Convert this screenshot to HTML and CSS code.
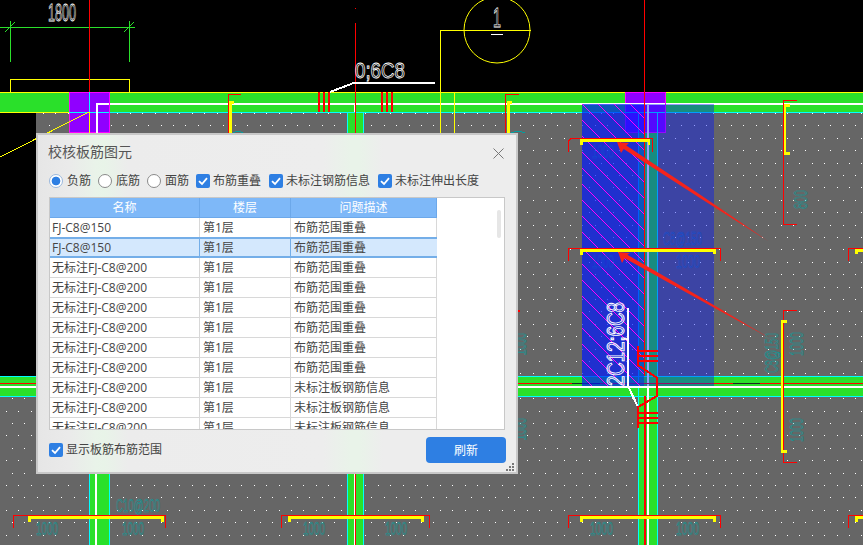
FILE: index.html
```html
<!DOCTYPE html>
<html lang="zh-CN">
<head>
<meta charset="utf-8">
<title>校核板筋图元</title>
<link rel="stylesheet" href="styles.css">
</head>
<body>
<main class="stage">
<svg class="cad" width="863" height="545" viewBox="0 0 863 545" aria-hidden="true">
  <defs>
    <pattern id="hatch" patternUnits="userSpaceOnUse" width="16" height="16">
      <path class="hatch" d="M0 2L14 16M14 0L16 2"/>
    </pattern>
  </defs>
  <rect class="gray" x="36" y="112" width="827" height="264"/>
  <rect class="gray" x="0" y="396" width="863" height="149"/>
  <path class="dots" d="M42.900 113.500H863M49 125.900H863M42.900 138.300H863M49 150.700H863M42.900 163.100H863M49 175.500H863M42.900 187.900H863M49 200.300H863M42.900 212.700H863M49 225.100H863M42.900 237.500H863M49 249.900H863M42.900 262.300H863M49 274.700H863M42.900 287.100H863M49 299.500H863M42.900 311.900H863M49 324.300H863M42.900 336.700H863M49 349.100H863M42.900 361.500H863M49 373.900H863M11.800 398.700H863M5.700 411.100H863M11.800 423.500H863M5.700 435.900H863M11.800 448.300H863M5.700 460.700H863M11.800 473.100H863M5.700 485.500H863M11.800 497.900H863M5.700 510.300H863M11.800 522.700H863M5.700 535.100H863"/>

  <!-- beams -->
  <rect class="green" x="0" y="92" width="863" height="20"/>
  <rect class="green" x="0" y="376" width="863" height="20"/>
  <rect class="green" x="89" y="396" width="20" height="149"/>
  <rect class="green" x="347" y="112" width="16" height="433"/>
  <rect class="green" x="638" y="112" width="20" height="433"/>
  <path class="ln y" d="M0 92.500H863M0 112.500H89"/>
  <path class="ln c" d="M109 112.500H863M0 376.500H863M0 396.500H863M89.500 396V545M109.500 396V545M347.500 112V545M363.500 112V545M638.500 112V545M657.500 112V545"/>
  <path class="ln w2" d="M97 103.500H863M355 103V112M0 387H863M96 396V545M355 396V545M648 112V545"/>
  <path class="ln r" d="M0 383.500H863"/>
  <path class="ln k" d="M572 383.500H600M733 383.500H760"/>

  <!-- columns -->
  <rect class="col" x="69.500" y="92.500" width="40" height="40"/>
  <rect class="col" x="625.500" y="92.500" width="40" height="40"/>
  <path class="ln c" d="M89.500 92V112M69 112.500H109M625 112.500H665M638.500 112V133M657.500 112V133"/>
  <path class="ln w2" d="M109 103.500H97V133M625 103.500H665M648 103V133"/>
  <path class="ln y" d="M89.500 112V133M0 157L89 112"/>

  <!-- dimension and section mark -->
  <path class="ln g" d="M0 27.500H135M10.500 21V62M129.500 21V62M5 32L15 22M124 32L134 22"/>
  <path class="ln y" d="M10.500 92V79.500H129.500V92"/>
  <rect class="rf" x="89" y="0" width="1" height="92"/>
  <rect class="rf" x="355" y="8" width="1" height="1"/>
  <rect class="rf" x="355" y="23" width="1" height="522"/>
  <circle class="ring" cx="497" cy="30" r="33"/>
  <path class="ln y" d="M440.500 133V30.500H531M454.500 92V133"/>
  <path class="ln w1" d="M491 34.500H503"/>
  <text class="cadw" x="493" y="27" font-size="28" textLength="8" lengthAdjust="spacingAndGlyphs">1</text>
  <text class="cadw" x="48" y="21" font-size="24" textLength="28" lengthAdjust="spacingAndGlyphs">1800</text>
  <text class="cadw" x="355" y="78" font-size="22" textLength="50" lengthAdjust="spacingAndGlyphs">0;6C8</text>
  <path class="ln w2" d="M355 82.500H435M355 82.500L330 92"/>
  <path class="ln r2" d="M319 92V112M324 92V112M329 92V112M382 92V112M387 92V112M392 92V112"/>

  <!-- top brackets -->
  <path class="ln r" d="M241 94.500H228.500V133M519 94.500H505.500V133M797 100.500H783.500V224.500H797"/>
  <path class="ly" d="M229 101H234V104H232V133H229ZM507 101H512V104H510V133H507ZM784 104H790V107H786V152H790V155H784Z"/>
  <path class="ln t" d="M233 133Q238 130 243 133M511 133Q518 130 525 133"/>
  <text class="cadt" transform="rotate(-90 807 209)" x="807" y="209" font-size="18" textLength="19" lengthAdjust="spacingAndGlyphs">800</text>
  <rect class="rf" x="518" y="310" width="2" height="2"/>

  <!-- slab overlay -->
  <rect class="ov" x="582" y="104" width="132" height="282"/>
  <rect class="ov2" x="582" y="104" width="62" height="282"/>
  <rect class="hf" x="582" y="104" width="62" height="282"/>
  <rect class="rf" x="644" y="0" width="1" height="376"/>
  <rect class="rf" x="644" y="396" width="2" height="149"/>

  <!-- bracket over slab -->
  <path class="ln r" d="M568.500 152V141L571 138.500H652.500V152M568.500 261V248.500H720.500V261M863 248.500H848.500V261"/>
  <path class="ly" d="M580 139H650V145H648V142H583V145H580ZM580 249H716V254H713V252H583V255H580ZM863 249H855V254H858V252H863Z"/>
  <text class="cadb" x="663" y="245" font-size="19" textLength="39" lengthAdjust="spacingAndGlyphs">C8@150</text>
  <text class="cadb" x="676" y="268" font-size="19" textLength="24" lengthAdjust="spacingAndGlyphs">1000</text>
  <text class="cadb" x="592" y="158" font-size="18" textLength="22" lengthAdjust="spacingAndGlyphs">1000</text>
  <text class="cadb" x="592" y="268" font-size="18" textLength="22" lengthAdjust="spacingAndGlyphs">1000</text>

  <!-- right bracket -->
  <path class="ln r" d="M797 310.500H783.500V462.500H797"/>
  <path class="ly" d="M781 320H787V323H783V450H787V453H781Z"/>
  <text class="cadt" transform="rotate(-90 803 356)" x="803" y="356" font-size="18" textLength="24" lengthAdjust="spacingAndGlyphs">1000</text>
  <text class="cadt" transform="rotate(-90 803 442)" x="803" y="442" font-size="18" textLength="24" lengthAdjust="spacingAndGlyphs">1000</text>
  <text class="cadt" transform="rotate(-90 778 373)" x="778" y="373" font-size="18" textLength="40" lengthAdjust="spacingAndGlyphs">C8@150</text>

  <!-- stirrup / leader -->
  <text class="cadw cadw-big" transform="rotate(-90 624 386)" x="624" y="386" font-size="24" textLength="84" lengthAdjust="spacingAndGlyphs">2C12;6C8</text>
  <path class="ln w2" d="M628 308V386L638 407"/>
  <path class="ln r2" d="M638 346V365L657 378V396L638 407V428M638 351H658M638 356H658M638 361H658M638 413H658M638 418H658M638 423H658"/>

  <!-- arrows -->
  <polygon class="arrow" points="617,142 629,143 626.300,145.400 701,195.200 768,241 699.500,197.800 623.700,149 621,153"/>
  <polygon class="arrow" points="618,252 630,253 627.300,254.700 701,297.400 773,340 699.500,299.800 624.700,258.300 622,263"/>

  <!-- bottom brackets -->
  <path class="ln r" d="M13.500 528V515.500H165.500V528M281.500 528V515.500H429.500V528M568.500 528V515.500H720.500V528M863 515.500H848.500V528"/>
  <path class="ly" d="M28 516H164V522H161V519H31V522H28ZM288 516H424V522H421V519H291V522H288ZM580 516H716V522H713V519H583V522H580ZM863 516H855V522H858V519H863Z"/>
  <text class="cadt" x="36" y="535" font-size="18" textLength="22" lengthAdjust="spacingAndGlyphs">1000</text>
  <text class="cadt" x="122" y="535" font-size="18" textLength="22" lengthAdjust="spacingAndGlyphs">1000</text>
  <text class="cadt" x="116" y="512" font-size="18" textLength="44" lengthAdjust="spacingAndGlyphs">C10@200</text>
  <text class="cadt" x="303" y="535" font-size="18" textLength="22" lengthAdjust="spacingAndGlyphs">1000</text>
  <text class="cadt" x="385" y="535" font-size="18" textLength="22" lengthAdjust="spacingAndGlyphs">1000</text>
  <text class="cadt" x="590" y="535" font-size="18" textLength="23" lengthAdjust="spacingAndGlyphs">1000</text>
  <text class="cadt" x="676" y="535" font-size="18" textLength="23" lengthAdjust="spacingAndGlyphs">1000</text>
  <text class="cadt" transform="rotate(-90 526 440)" x="526" y="440" font-size="18" textLength="22" lengthAdjust="spacingAndGlyphs">1000</text>
  <text class="cadt" transform="rotate(-90 526 355)" x="526" y="355" font-size="18" textLength="22" lengthAdjust="spacingAndGlyphs">1000</text>
</svg>

<section class="dialog" aria-label="校核板筋图元">
  <header class="dialog-head">
    <h1 class="dialog-title">校核板筋图元</h1>
    <svg class="close" width="11" height="11" viewBox="0 0 11 11"><path d="M0.500 0.500L10.500 10.500M10.500 0.500L0.500 10.500"/></svg>
  </header>

  <div class="options">
    <span class="opt opt-radio"><i class="radio radio-on"></i>负筋</span>
    <span class="opt opt-radio"><i class="radio"></i>底筋</span>
    <span class="opt opt-radio"><i class="radio"></i>面筋</span>
    <span class="opt"><i class="check"><svg width="14" height="14" viewBox="0 0 14 14"><path d="M3 7.200L6 10L11 4.200"/></svg></i>布筋重叠</span>
    <span class="opt opt-wide"><i class="check"><svg width="14" height="14" viewBox="0 0 14 14"><path d="M3 7.200L6 10L11 4.200"/></svg></i>未标注钢筋信息</span>
    <span class="opt"><i class="check"><svg width="14" height="14" viewBox="0 0 14 14"><path d="M3 7.200L6 10L11 4.200"/></svg></i>未标注伸出长度</span>
  </div>

  <div class="table-box">
    <div class="table">
      <div class="row row-head"><span>名称</span><span>楼层</span><span>问题描述</span></div>
      <div class="row"><span>FJ-C8@150</span><span>第1层</span><span>布筋范围重叠</span></div>
      <div class="row row-on"><span>FJ-C8@150</span><span>第1层</span><span>布筋范围重叠</span></div>
      <div class="row"><span>无标注FJ-C8@200</span><span>第1层</span><span>布筋范围重叠</span></div>
      <div class="row"><span>无标注FJ-C8@200</span><span>第1层</span><span>布筋范围重叠</span></div>
      <div class="row"><span>无标注FJ-C8@200</span><span>第1层</span><span>布筋范围重叠</span></div>
      <div class="row"><span>无标注FJ-C8@200</span><span>第1层</span><span>布筋范围重叠</span></div>
      <div class="row"><span>无标注FJ-C8@200</span><span>第1层</span><span>布筋范围重叠</span></div>
      <div class="row"><span>无标注FJ-C8@200</span><span>第1层</span><span>布筋范围重叠</span></div>
      <div class="row"><span>无标注FJ-C8@200</span><span>第1层</span><span>未标注板钢筋信息</span></div>
      <div class="row"><span>无标注FJ-C8@200</span><span>第1层</span><span>未标注板钢筋信息</span></div>
      <div class="row"><span>无标注FJ-C8@200</span><span>第1层</span><span>未标注板钢筋信息</span></div>
    </div>
    <div class="track"><div class="thumb"></div></div>
  </div>

  <footer class="dialog-foot">
    <span class="opt"><i class="check"><svg width="14" height="14" viewBox="0 0 14 14"><path d="M3 7.200L6 10L11 4.200"/></svg></i>显示板筋布筋范围</span>
    <button class="refresh" type="button">刷新</button>
  </footer>
  <svg class="grip" width="8" height="8" viewBox="0 0 8 8"><path d="M6 0h2v2H6zM3 3h2v2H3zM6 3h2v2H6zM0 6h2v2H0zM3 6h2v2H3zM6 6h2v2H6z"/></svg>
</section>
</main>
</body>
</html>
```

FILE: styles.css
```css
* { box-sizing: border-box; }
html, body { margin: 0; padding: 0; background: #000; }
body { width: 863px; height: 545px; overflow: hidden; }

.stage { position: relative; width: 863px; height: 545px; background: #000; overflow: hidden; }
.cad { display: block; }

/* CAD drawing */
.gray { fill: #666; }
.dots { fill: none; stroke: #fff; stroke-width: 1; stroke-dasharray: 1 11.4; shape-rendering: crispEdges; }
.green { fill: #2ae02a; }
.ln { fill: none; shape-rendering: crispEdges; }
.y { stroke: #ff0; stroke-width: 1; }
.c { stroke: #0ff; stroke-width: 1; }
.g { stroke: #2be02b; stroke-width: 1; }
.r { stroke: #f00; stroke-width: 1; }
.t { stroke: #00a0a0; stroke-width: 1; }
.k { stroke: #222; stroke-width: 1; }
.r2 { stroke: #f00; stroke-width: 2; }
.w1 { stroke: #fff; stroke-width: 1; }
.w2 { stroke: #fff; stroke-width: 2; }
.rf { fill: #f00; shape-rendering: crispEdges; }
.ly { fill: #ff0; shape-rendering: crispEdges; }
.col { fill: #9000ff; stroke: #f0f; stroke-width: 1; shape-rendering: crispEdges; }
.ring { fill: none; stroke: #ff0; stroke-width: 1; }
.ov { fill: rgba(0, 20, 253, .41); shape-rendering: crispEdges; }
.ov2 { fill: rgba(0, 25, 255, .47); shape-rendering: crispEdges; }
.hf { fill: url(#hatch); }
.hatch { fill: none; stroke: #f0f; stroke-width: 1; shape-rendering: crispEdges; }
.arrow { fill: #f5231b; }
.cadw, .cadt, .cadb { font-family: "Liberation Sans", sans-serif; fill: none; stroke-width: .5; }
.cadw { stroke: #fff; stroke-width: .8; }
.cadw-big { stroke-width: 1; }
.cadt { stroke: #00a0a0; }
.cadb { stroke: #0c50d2; }

/* Dialog */
.dialog {
  position: absolute;
  left: 36px;
  top: 133px;
  width: 482px;
  height: 341px;
  border: 2px solid #c8c8c8;
  display: flex;
  flex-direction: column;
  font-family: "Open Sans", "Noto Sans CJK SC", sans-serif;
  font-size: 12px;
  color: #444;
  background: linear-gradient(90deg, #e6e6e6 0, #eaeaea 30px, #e9f3e9 58px, #e8f4e8 66px, #ececec 90px, #ededed 285px, #e9f3e9 312px, #e9f3e9 322px, #ededed 345px, #ededed 100%);
}
.dialog-head { height: 37px; display: flex; align-items: center; justify-content: space-between; padding: 0 12px 0 10px; }
.dialog-title { margin: 0 0 3px; font-size: 14px; line-height: 20px; font-weight: 400; color: #555; }
.close { margin-bottom: 1px; }
.close path { fill: none; stroke: #777; stroke-width: 1; }

.options { height: 18px; display: flex; align-items: center; gap: 7px; padding-left: 11px; }
.opt { display: inline-flex; align-items: center; gap: 3px; white-space: nowrap; line-height: 18px; }
.opt-radio { gap: 4px; }
.opt-wide { margin-left: 1px; margin-right: 1px; }

.radio { width: 14px; height: 14px; flex: none; border-radius: 50%; background: #fff; border: 1px solid #8a8a8a; display: block; }
.radio-on { border-color: #9ab8de; background: radial-gradient(circle, #2e7fe3 0, #2e7fe3 4px, #fff 4.7px); }
.check { width: 14px; height: 14px; flex: none; border-radius: 2px; background: #2e7fe3; display: block; }
.check svg { display: block; }
.check path { fill: none; stroke: #fff; stroke-width: 1.8; }

.table-box {
  margin: 7px 0 0 11px;
  width: 456px;
  height: 233px;
  border: 1px solid #c8c8c8;
  background: #fff;
  overflow: hidden;
  display: flex;
  flex: none;
}
.table { width: 387px; flex: none; }
.row { display: grid; grid-template-columns: 150px 91px 146px; height: 20px; border-bottom: 1px solid #d8d8d8; line-height: 19px; color: #444; }
.row span { padding-left: 3px; border-right: 1px solid #d8d8d8; white-space: nowrap; overflow: hidden; }
.row span:first-child { padding-left: 2px; }
.row-head { background: #7eb8f8; border-bottom-color: #6ca8ea; color: #fff; }
.row-head span, .row-head span:first-child { text-align: center; padding-left: 0; border-right-color: #6ca8ea; }
.row-on { background: #d4e8fd; border: 2px solid #74aee8; border-width: 2px 1px 2px 0; margin-top: -1px; height: 21px; line-height: 18px; }
.row-on span { border-right-color: #d4e8fd; }
.row-on span:first-child { border-right-color: #74aee8; }
.row-on span:nth-child(2) { border-right-color: #74aee8; }

.track { flex: 1; padding: 12px 0 0 60px; }
.thumb { width: 4px; height: 28px; border-radius: 2px; background: #e6e6e6; }

.dialog-foot { flex: 1; display: flex; align-items: center; justify-content: space-between; padding: 0 10px 2px 11px; }
.refresh {
  width: 80px;
  height: 26px;
  border: 0;
  border-radius: 4px;
  background: #2e7fe3;
  color: #fff;
  font: inherit;
  padding: 0;
}
.grip { position: absolute; right: 2px; bottom: 1px; fill: #777; }
```
